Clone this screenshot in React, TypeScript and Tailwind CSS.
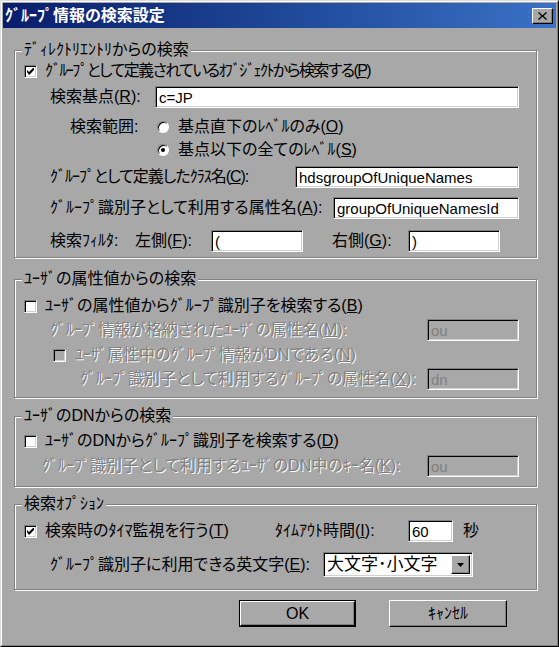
import React from 'react';

const BG = 'bg-[#a8a8a8]';

function Check({ checked, disabled }: { checked?: boolean; disabled?: boolean }) {
  return (
    <div
      className={`w-[13px] h-[13px] shrink-0 flex items-center justify-center border border-t-[#808080] border-l-[#808080] border-b-white border-r-white shadow-[inset_1px_1px_0_#000,inset_-1px_-1px_0_#d0d0d0] ${
        disabled ? BG : 'bg-white'
      }`}
    >
      {checked && (
        <svg width="7" height="7" viewBox="0 0 7 7">
          <path d="M0 2 L2 4 L6 0 L7 0 L7 2 L2 7 L0 4 Z" fill="#000" />
        </svg>
      )}
    </div>
  );
}

function Radio({ checked }: { checked?: boolean }) {
  return (
    <div className="w-[12px] h-[12px] shrink-0 rounded-full bg-white flex items-center justify-center border border-t-[#808080] border-l-[#808080] border-b-white border-r-white shadow-[inset_1px_1px_0_#000]">
      {checked && <div className="w-[4px] h-[4px] rounded-full bg-black" />}
    </div>
  );
}

function Field({ value, w, disabled }: { value: string; w: string; disabled?: boolean }) {
  return (
    <div
      className={`h-[22px] shrink-0 flex items-center pl-[3px] font-['Liberation_Sans',sans-serif] text-[15px] border border-t-[#808080] border-l-[#808080] border-b-white border-r-white shadow-[inset_1px_1px_0_#000,inset_-1px_-1px_0_#d0d0d0] ${w} ${
        disabled ? 'bg-[#a8a8a8] text-[#808080]' : 'bg-white text-black'
      }`}
    >
      {value}
    </div>
  );
}

function Group({ title, className, children }: { title: string; className: string; children: React.ReactNode }) {
  return (
    <div className={`relative border border-[#808080] shadow-[inset_1px_1px_0_#fff,1px_1px_0_#fff] ${className}`}>
      <span className={`absolute left-[7px] top-[-10px] px-[2px] leading-[18px] ${BG}`}>{title}</span>
      {children}
    </div>
  );
}

const dis = 'text-[#808080] [text-shadow:1px_1px_0_#fff]';

export default function App() {
  return (
    <div className="w-[559px] h-[647px] bg-[#a8a8a8] border border-t-[#dcdcdc] border-l-[#dcdcdc] border-b-black border-r-black text-black text-[16px] leading-none font-['Liberation_Sans','Noto_Sans_CJK_JP',sans-serif] [font-feature-settings:'palt']">
      <div className="h-full flex flex-col p-[1px] border border-t-white border-l-white border-b-[#808080] border-r-[#808080]">
        {/* title bar */}
        <div className="h-[25px] shrink-0 flex items-center justify-between pl-[2px] pr-[3px] bg-gradient-to-r from-[#0a1d6b] to-[#3a72c6]">
          <span className="text-white font-bold">ｸﾞﾙｰﾌﾟ情報の検索設定</span>
          <div className="w-[21px] h-[16px] flex items-center justify-center bg-[#a8a8a8] border border-t-white border-l-white border-b-black border-r-black shadow-[inset_-1px_-1px_0_#808080]">
            <svg width="9" height="8" viewBox="0 0 9 8">
              <path d="M1 0 L4.5 3.2 L8 0 L9 1 L5.6 4 L9 7 L8 8 L4.5 4.8 L1 8 L0 7 L3.4 4 L0 1 Z" fill="#000" />
            </svg>
          </div>
        </div>

        <div className="pl-[11px] pr-[19px] flex flex-col">
          {/* ディレクトリエントリ */}
          <Group title="ﾃﾞｨﾚｸﾄﾘｴﾝﾄﾘからの検索" className="mt-[22px] pb-[5px]">
            <div className="mt-[10px] h-[20px] flex items-center pl-[9px]">
              <Check checked />
              <span className="ml-[8px] tracking-[-1.6px]">ｸﾞﾙｰﾌﾟとして定義されているｵﾌﾞｼﾞｪｸﾄから検索する(<u>P</u>)</span>
            </div>
            <div className="mt-[5px] h-[22px] flex items-center pl-[35px]">
              <span className="w-[105px] shrink-0">検索基点(<u>R</u>):</span>
              <Field value="c=JP" w="w-[364px]" />
            </div>
            <div className="mt-[9px] h-[20px] flex items-center pl-[55px]">
              <span className="w-[87px] shrink-0">検索範囲:</span>
              <Radio />
              <span className="ml-[9px]">基点直下のﾚﾍﾞﾙのみ(<u>O</u>)</span>
            </div>
            <div className="mt-[3px] h-[20px] flex items-center pl-[142px]">
              <Radio checked />
              <span className="ml-[9px]">基点以下の全てのﾚﾍﾞﾙ(<u>S</u>)</span>
            </div>
            <div className="mt-[6px] h-[22px] flex items-center pl-[35px]">
              <span className="w-[245px] shrink-0 tracking-[-1px]">ｸﾞﾙｰﾌﾟとして定義したｸﾗｽ名(<u>C</u>):</span>
              <Field value="hdsgroupOfUniqueNames" w="w-[224px]" />
            </div>
            <div className="mt-[9px] h-[22px] flex items-center pl-[35px]">
              <span className="w-[283px] shrink-0">ｸﾞﾙｰﾌﾟ識別子として利用する属性名(<u>A</u>):</span>
              <Field value="groupOfUniqueNamesId" w="w-[186px]" />
            </div>
            <div className="mt-[11px] h-[22px] flex items-center pl-[35px]">
              <span className="w-[85px] shrink-0">検索ﾌｨﾙﾀ:</span>
              <span className="w-[76px] shrink-0">左側(<u>F</u>):</span>
              <Field value="(" w="w-[92px]" />
              <span className="ml-[29px] w-[76px] shrink-0">右側(<u>G</u>):</span>
              <Field value=")" w="w-[92px]" />
            </div>
          </Group>

          {/* ユーザの属性値 */}
          <Group title="ﾕｰｻﾞの属性値からの検索" className="mt-[21px] pb-[7px]">
            <div className="mt-[16px] h-[20px] flex items-center pl-[9px]">
              <Check />
              <span className="ml-[8px]">ﾕｰｻﾞの属性値からｸﾞﾙｰﾌﾟ識別子を検索する(<u>B</u>)</span>
            </div>
            <div className="mt-[3px] h-[22px] flex items-center pl-[35px]">
              <span className={`w-[377px] shrink-0 ${dis}`}>ｸﾞﾙｰﾌﾟ情報が格納されたﾕｰｻﾞの属性名(<u>M</u>):</span>
              <Field value="ou" w="w-[92px]" disabled />
            </div>
            <div className="mt-[4px] h-[20px] flex items-center pl-[38px]">
              <Check disabled />
              <span className={`ml-[9px] ${dis}`}>ﾕｰｻﾞ属性中のｸﾞﾙｰﾌﾟ情報がDNである(<u>N</u>)</span>
            </div>
            <div className="mt-[3px] h-[22px] flex items-center pl-[65px]">
              <span className={`w-[347px] shrink-0 ${dis}`}>ｸﾞﾙｰﾌﾟ識別子として利用するｸﾞﾙｰﾌﾟの属性名(<u>X</u>):</span>
              <Field value="dn" w="w-[92px]" disabled />
            </div>
          </Group>

          {/* ユーザのDN */}
          <Group title="ﾕｰｻﾞのDNからの検索" className="mt-[18px] pb-[9px]">
            <div className="mt-[14px] h-[20px] flex items-center pl-[9px]">
              <Check />
              <span className="ml-[8px]">ﾕｰｻﾞのDNからｸﾞﾙｰﾌﾟ識別子を検索する(<u>D</u>)</span>
            </div>
            <div className="mt-[4px] h-[22px] flex items-center pl-[27px]">
              <span className={`w-[385px] shrink-0 ${dis}`}>ｸﾞﾙｰﾌﾟ識別子として利用するﾕｰｻﾞのDN中のｷｰ名(<u>K</u>):</span>
              <Field value="ou" w="w-[92px]" disabled />
            </div>
          </Group>

          {/* 検索オプション */}
          <Group title="検索ｵﾌﾟｼｮﾝ" className="mt-[17px] pb-[12px]">
            <div className="mt-[15px] h-[22px] flex items-center pl-[9px]">
              <Check checked />
              <span className="ml-[8px] w-[230px] shrink-0">検索時のﾀｲﾏ監視を行う(<u>T</u>)</span>
              <span className="w-[133px] shrink-0">ﾀｲﾑｱｳﾄ時間(<u>I</u>):</span>
              <Field value="60" w="w-[45px]" />
              <span className="ml-[10px]">秒</span>
            </div>
            <div className="mt-[10px] h-[25px] flex items-center pl-[35px]">
              <span className="w-[273px] shrink-0">ｸﾞﾙｰﾌﾟ識別子に利用できる英文字(<u>E</u>):</span>
              <div className="w-[150px] h-[25px] shrink-0 flex items-center justify-between pl-[3px] pr-[2px] bg-white border border-t-[#808080] border-l-[#808080] border-b-white border-r-white shadow-[inset_1px_1px_0_#000,inset_-1px_-1px_0_#d0d0d0]">
                <span className="text-[17px]">大文字･小文字</span>
                <div className="w-[19px] h-[19px] flex items-center justify-center bg-[#a8a8a8] border border-t-white border-l-white border-b-black border-r-black shadow-[inset_-1px_-1px_0_#808080]">
                  <svg width="7" height="4" viewBox="0 0 7 4">
                    <path d="M0 0 H7 L3.5 4 Z" fill="#000" />
                  </svg>
                </div>
              </div>
            </div>
          </Group>

          {/* buttons */}
          <div className="mt-[10px] flex">
            <div className="ml-[225px] w-[117px] h-[27px] border border-black">
              <div className="h-full flex items-center justify-center border border-t-white border-l-white border-b-black border-r-black shadow-[inset_-1px_-1px_0_#808080]">
                OK
              </div>
            </div>
            <div className="ml-[33px] w-[118px] h-[27px] flex items-center justify-center border border-t-white border-l-white border-b-black border-r-black shadow-[inset_-1px_-1px_0_#808080]">
              ｷｬﾝｾﾙ
            </div>
          </div>
        </div>
      </div>
    </div>
  );
}
